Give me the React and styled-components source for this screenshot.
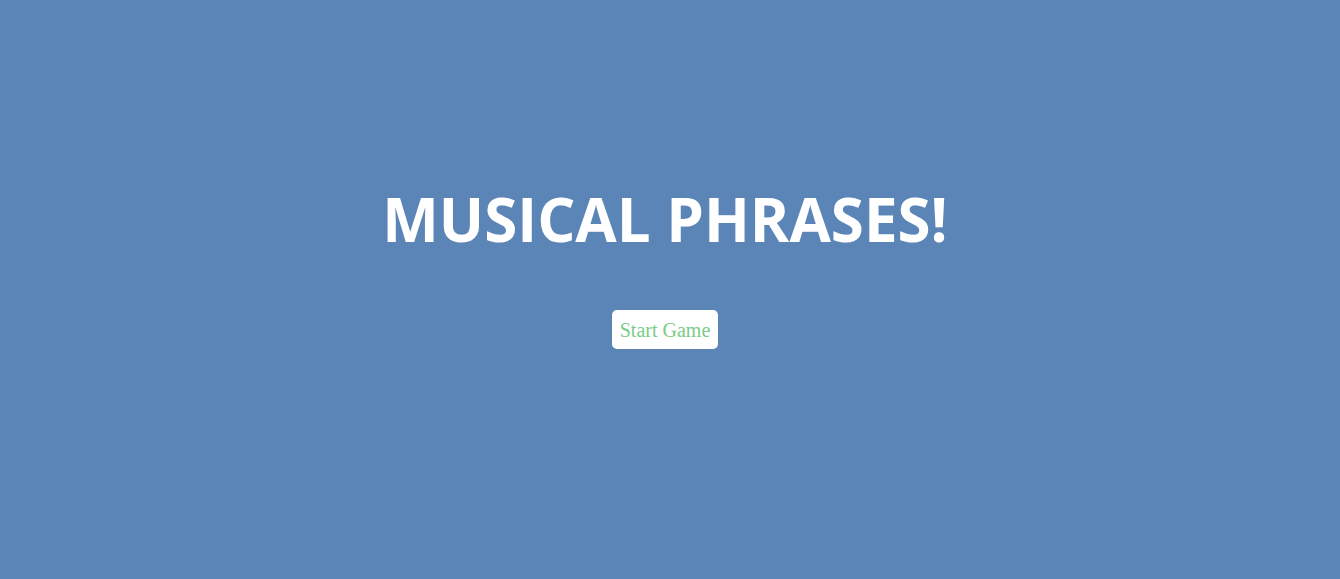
import React from "react";
import styled, { createGlobalStyle } from "styled-components";

const GlobalStyle = createGlobalStyle`
  body {
    margin: 0;
    background: #5b85b7;
  }
`;

const StartScreen = styled.main`
  box-sizing: border-box;
  min-height: 100vh;
  padding: 178px 10px 32px 0;
  display: flex;
  flex-direction: column;
  align-items: center;
  gap: 50px;
`;

const Title = styled.h1`
  margin: 0;
  color: #fff;
  font: 700 60px/82px "Open Sans", sans-serif;
  text-align: center;
  text-transform: uppercase;
`;

const StartButton = styled.button`
  padding: 9px 8px 7px;
  border: 0;
  border-radius: 5px;
  background: #fff;
  color: #7acc8a;
  font: 20px/23px "Liberation Serif", serif;
  cursor: pointer;
`;

export default function App() {
  return (
    <>
      <GlobalStyle />
      <StartScreen>
        <Title>Musical Phrases!</Title>
        <StartButton type="button">Start Game</StartButton>
      </StartScreen>
    </>
  );
}
